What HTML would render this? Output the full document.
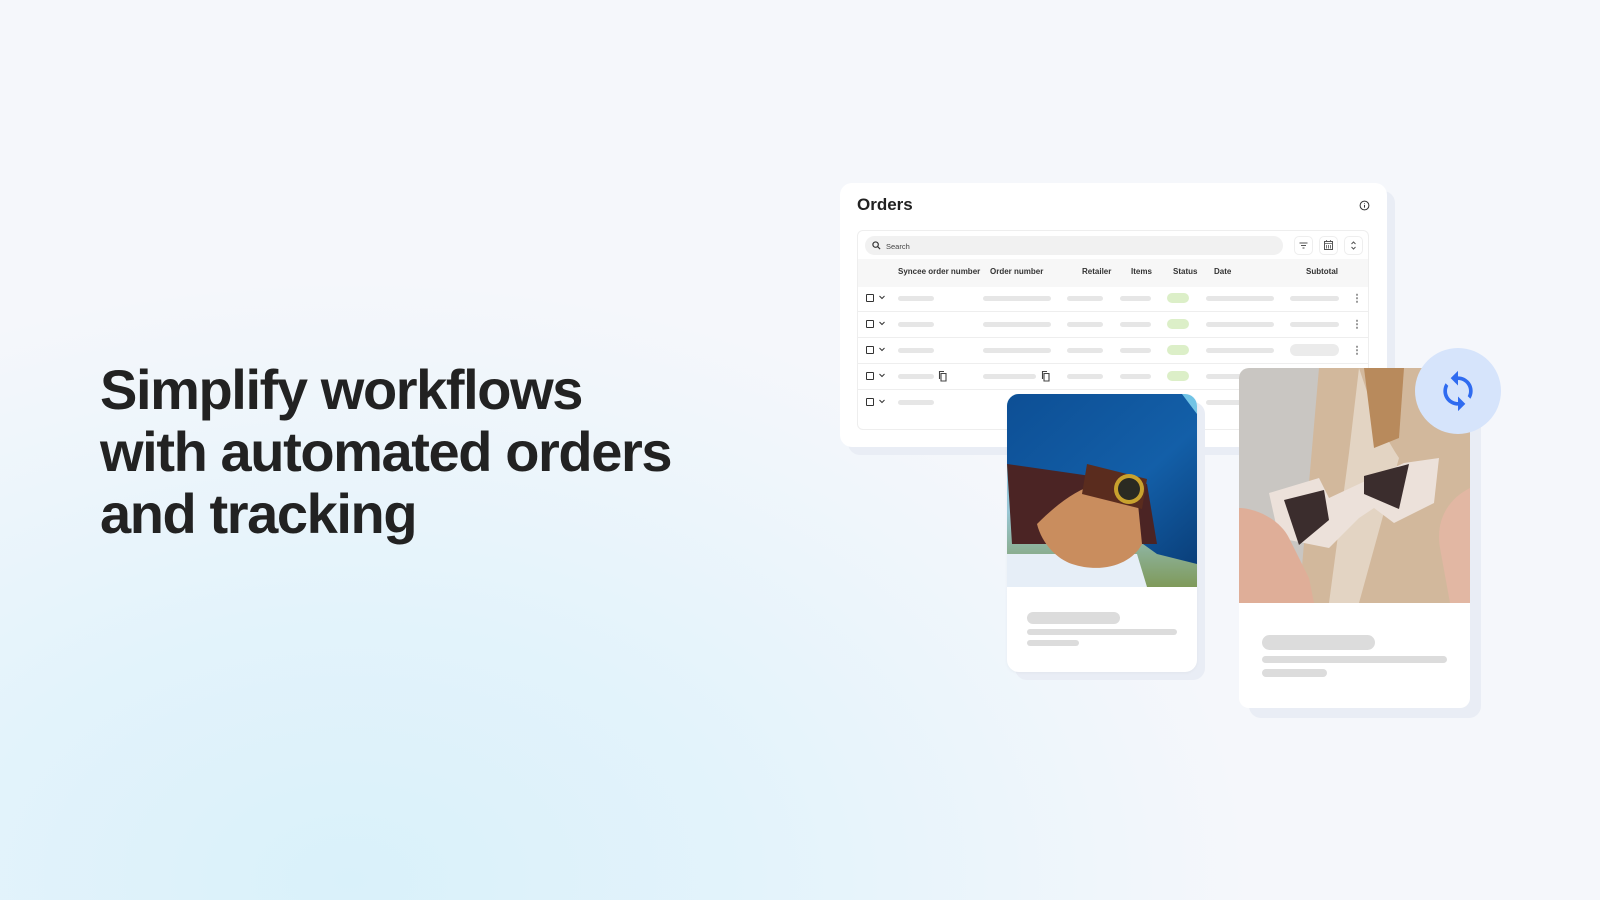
<!DOCTYPE html>
<html><head><meta charset="utf-8">
<style>
*{margin:0;padding:0;box-sizing:border-box}
body{width:1600px;height:900px;overflow:hidden;position:relative;font-family:"Liberation Sans",sans-serif;
background:radial-gradient(ellipse 900px 600px at 350px 880px,#d9f1fa 0%,#e3f3fb 45%,rgba(240,246,251,0) 100%),#f5f7fb;}
.h{position:absolute;left:100px;top:359px;font-size:56px;line-height:62px;font-weight:700;color:#222;letter-spacing:-1.4px}
.abs{position:absolute}
.card{position:absolute;background:#fff;border-radius:12px}
.sh{position:absolute;background:#e9edf5;border-radius:12px}
.bar{position:absolute;height:5px;border-radius:3px;background:#e6e6e6}
.th{position:absolute;top:267px;font-size:8px;font-weight:700;color:#333}
.cb{position:absolute;width:8px;height:8px;border:1.3px solid #333;border-radius:1px}
.pill{position:absolute;width:22px;height:10px;border-radius:5px;background:#dcefc8}
.dots{position:absolute;width:2px;height:10px;background:radial-gradient(circle,#999 1px,transparent 1.2px) 0 0/2px 3.5px}
.sk{position:absolute;background:#dcdcdc;border-radius:8px}
</style></head><body>
<div class="h">Simplify workflows<br>with automated orders<br>and tracking</div>

<div class="sh" style="left:848px;top:191px;width:547px;height:264px"></div>
<div class="card" style="left:840px;top:183px;width:547px;height:264px"></div>
<div class="abs" style="left:857px;top:195px;font-size:17px;font-weight:700;color:#222">Orders</div>
<svg class="abs" style="left:1359px;top:200px" width="11" height="11" viewBox="0 0 12 12"><circle cx="6" cy="6" r="4.8" fill="none" stroke="#333" stroke-width="1.1"/><path d="M6 5.3v3M6 3.6v.6" stroke="#333" stroke-width="1.1"/></svg>
<div class="abs" style="left:857px;top:230px;width:512px;height:200px;border:1px solid #eee;border-radius:6px;overflow:hidden">
 <div class="abs" style="left:0;top:28px;width:512px;height:28px;background:#f7f7f7"></div>
 <div class="abs" style="left:0;top:80px;width:512px;height:1px;background:#eee"></div>
 <div class="abs" style="left:0;top:106px;width:512px;height:1px;background:#eee"></div>
 <div class="abs" style="left:0;top:132px;width:512px;height:1px;background:#eee"></div>
 <div class="abs" style="left:0;top:158px;width:512px;height:1px;background:#eee"></div>
</div>
<div class="abs" style="left:865px;top:236px;width:418px;height:19px;border-radius:10px;background:#f1f1f1"></div>
<svg class="abs" style="left:872px;top:241px" width="9" height="9" viewBox="0 0 10 10"><circle cx="4" cy="4" r="3" fill="none" stroke="#333" stroke-width="1.3"/><path d="M6.2 6.2L9 9" stroke="#333" stroke-width="1.3"/></svg>
<div class="abs" style="left:886px;top:242px;font-size:7.5px;color:#444">Search</div>
<div class="abs" style="left:1294px;top:236px;width:19px;height:19px;border:1px solid #eee;border-radius:5px"></div>
<div class="abs" style="left:1319px;top:236px;width:19px;height:19px;border:1px solid #eee;border-radius:5px"></div>
<div class="abs" style="left:1344px;top:236px;width:19px;height:19px;border:1px solid #eee;border-radius:5px"></div>
<svg class="abs" style="left:1298px;top:240px" width="11" height="11" viewBox="0 0 11 11"><path d="M1.5 3h8M3 5.5h5M4.5 8h2" stroke="#555" stroke-width="1"/></svg>
<svg class="abs" style="left:1323px;top:239px" width="11" height="12" viewBox="0 0 11 12"><rect x="1.5" y="2.5" width="8" height="8" fill="none" stroke="#555" stroke-width="1"/><path d="M1.5 4.5h8M3.5 1v2M7.5 1v2M3.5 6v3.5M5.5 6v3.5M7.5 6v3.5" stroke="#555" stroke-width=".8"/></svg>
<svg class="abs" style="left:1348px;top:240px" width="11" height="11" viewBox="0 0 11 11"><path d="M3.5 4l2-2 2 2M3.5 7l2 2 2-2" fill="none" stroke="#555" stroke-width="1"/></svg>

<div class="th" style="left:898px">Syncee order number</div>
<div class="th" style="left:990px">Order number</div>
<div class="th" style="left:1082px">Retailer</div>
<div class="th" style="left:1131px">Items</div>
<div class="th" style="left:1173px">Status</div>
<div class="th" style="left:1214px">Date</div>
<div class="th" style="left:1306px">Subtotal</div>

<div id="rows"></div>
<script>
var ys=[298,324,350,376,402],h='';
ys.forEach(function(y,i){
h+='<div class="cb" style="left:866px;top:'+(y-4)+'px"></div>';
h+='<svg class="abs" style="left:879px;top:'+(y-3)+'px" width="6" height="5"><path d="M.5 1l2.5 2.5L5.5 1" fill="none" stroke="#333" stroke-width="1"/></svg>';
h+='<div class="bar" style="left:898px;top:'+(y-2)+'px;width:36px"></div>';
if(i<4){h+='<div class="bar" style="left:983px;top:'+(y-2)+'px;width:'+(i==3?53:68)+'px"></div>';}
if(i<4){h+='<div class="bar" style="left:1067px;top:'+(y-2)+'px;width:36px"></div><div class="bar" style="left:1120px;top:'+(y-2)+'px;width:31px"></div><div class="pill" style="left:1167px;top:'+(y-5)+'px"></div>';}
h+='<div class="bar" style="left:1206px;top:'+(y-2)+'px;width:68px"></div>';
if(i<3){h+=(i==2?'<div class="bar" style="left:1290px;top:'+(y-6)+'px;width:49px;height:12px;border-radius:6px;background:#ebebeb"></div>':'<div class="bar" style="left:1290px;top:'+(y-2)+'px;width:49px"></div>')+'<div class="dots" style="left:1356px;top:'+(y-5)+'px"></div>';}
if(i==3){h+='<svg class="abs" style="left:938px;top:'+(y-6)+'px" width="10" height="12"><path d="M3 3.5h5v7.5H3zM1.5 9V1.5H6" fill="none" stroke="#444" stroke-width="1.1"/></svg><svg class="abs" style="left:1041px;top:'+(y-6)+'px" width="10" height="12"><path d="M3 3.5h5v7.5H3zM1.5 9V1.5H6" fill="none" stroke="#444" stroke-width="1.1"/></svg>';}
});
document.getElementById('rows').innerHTML=h;
</script>

<div class="sh" style="left:1015px;top:402px;width:190px;height:278px"></div>
<div class="card" style="left:1007px;top:394px;width:190px;height:278px;overflow:hidden;box-shadow:0 1px 3px rgba(0,0,0,.04)">
<svg width="190" height="193" viewBox="0 0 190 193" style="display:block">
<defs><linearGradient id="bl" x1="0" y1="0" x2="1" y2="1"><stop offset="0" stop-color="#0d4f95"/><stop offset=".6" stop-color="#135fa8"/><stop offset="1" stop-color="#0a3f7a"/></linearGradient>
<linearGradient id="bg2" x1="0" y1="0" x2="0" y2="1"><stop offset="0" stop-color="#6fc3e6"/><stop offset=".6" stop-color="#9ac8d8"/><stop offset="1" stop-color="#7f9a5a"/></linearGradient></defs>
<rect width="190" height="193" fill="url(#bg2)"/>
<path d="M0 0h175l15 20v150L150 160 80 110 0 70z" fill="url(#bl)"/>
<path d="M0 70l140 20 10 60-145 0z" fill="#4b2424"/>
<path d="M0 160h130l10 33H0z" fill="#e6eef7"/>
<path d="M30 130c20-20 40-35 60-40l40 10 5 50c-10 20-40 30-70 20-15-5-30-20-35-40z" fill="#c98d5e"/>
<path d="M80 70l60 15-5 30-60-15z" fill="#5a2c1e"/>
<circle cx="122" cy="95" r="15" fill="#c9a22e"/><circle cx="122" cy="95" r="11" fill="#2a2a22"/>
</svg>
</div>
<div class="sk" style="left:1027px;top:612px;width:93px;height:12px;border-radius:6px"></div>
<div class="sk" style="left:1027px;top:629px;width:150px;height:6px"></div>
<div class="sk" style="left:1027px;top:640px;width:52px;height:6px"></div>

<div class="sh" style="left:1249px;top:378px;width:232px;height:340px"></div>
<div class="card" style="left:1239px;top:368px;width:231px;height:340px;overflow:hidden;border-radius:10px">
<svg width="231" height="235" viewBox="0 0 231 235" style="display:block">
<rect width="231" height="235" fill="#c9c6c2"/>
<path d="M80 0h151v235H60l10-120z" fill="#d2b89c"/>
<path d="M120 0c10 30 20 60 40 90l-40 145H90l20-150z" fill="#e3d4c3"/>
<path d="M125 0h40l-5 70-25 10z" fill="#b88a5c"/>
<path d="M30 125l50-15 10 20 75-35 35-5-5 45-40 20-20-15-15 10-30 30-50-10z" fill="#ece1da"/>
<path d="M45 132l40-10 5 30-30 25z" fill="#3b2d2d"/>
<path d="M125 108l45-12-10 45-35-15z" fill="#3b2d2d"/>
<path d="M0 140c15 0 40 10 50 30l20 40 5 25H0z" fill="#dfae98"/>
<path d="M231 120c-20 10-35 30-30 60l10 55h20z" fill="#e2b7a3"/>
</svg>
</div>
<div class="sk" style="left:1262px;top:635px;width:113px;height:15px"></div>
<div class="sk" style="left:1262px;top:656px;width:185px;height:7px;border-radius:4px"></div>
<div class="sk" style="left:1262px;top:669px;width:65px;height:8px;border-radius:4px"></div>

<div class="abs" style="left:1415px;top:348px;width:86px;height:86px;border-radius:50%;background:#d6e4fb"></div>
<svg class="abs" style="left:1436px;top:369px" width="44" height="44" viewBox="0 0 24 24"><path fill="#2f6bf0" d="M12 4V1L8 5l4 4V6c3.31 0 6 2.69 6 6 0 1.010-.25 1.97-.7 2.8l1.46 1.46C19.54 15.03 20 13.57 20 12c0-4.420-3.580-8-8-8zm0 14c-3.310 0-6-2.690-6-6 0-1.010.25-1.970.7-2.8L5.24 7.74C4.46 8.97 4 10.43 4 12c0 4.42 3.58 8 8 8v3l4-4-4-4v3z"/></svg>
</body></html>
